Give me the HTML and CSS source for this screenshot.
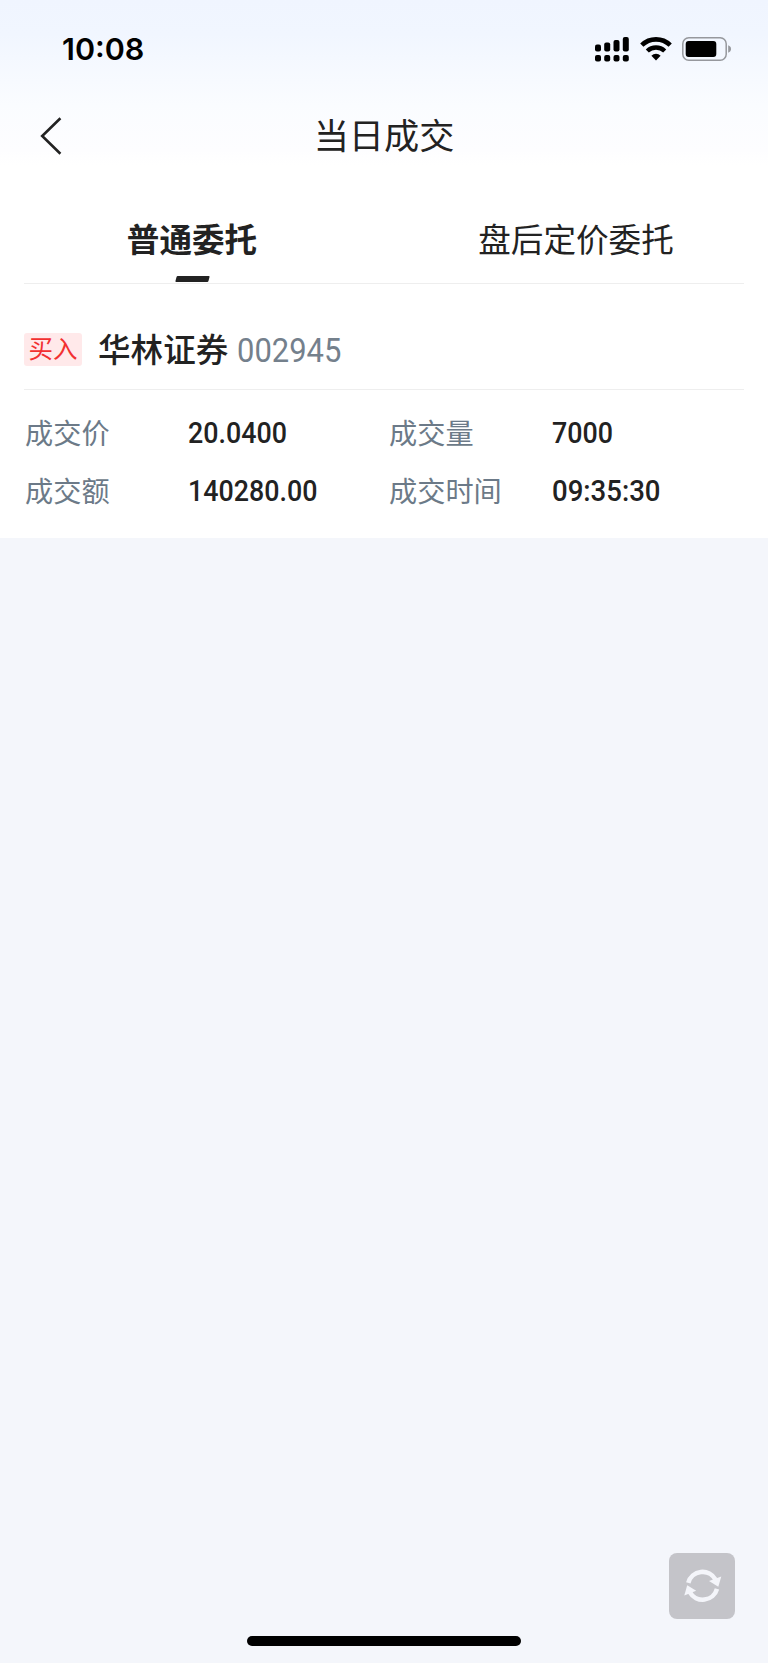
FILE: index.html
```
<!DOCTYPE html>
<html lang="zh-CN">
<head>
    <meta charset="UTF-8">
    <meta name="viewport" content="width=device-width, initial-scale=1.0">
    <title>当日成交</title>
    <link rel="stylesheet" href="styles.css">
</head>
<body>

<div class="top">
    <div class="status-bar">
        <span class="time">10:08</span>
        <div class="status-icons">
            <svg class="signal" width="34" height="25" viewBox="0 0 34 25">
                <rect x="0" y="7.5" width="6" height="7" rx="2"/>
                <rect x="9.2" y="5.5" width="6" height="9" rx="2"/>
                <rect x="18.5" y="3" width="6" height="11.5" rx="2"/>
                <rect x="27.8" y="0" width="6" height="14.5" rx="2"/>
                <rect x="0" y="18" width="6" height="6.4" rx="2"/>
                <rect x="9.2" y="18" width="6" height="6.4" rx="2"/>
                <rect x="18.5" y="18" width="6" height="6.4" rx="2"/>
                <rect x="27.8" y="18" width="6" height="6.4" rx="2"/>
            </svg>
            <svg class="wifi" width="32" height="24" viewBox="0 0 32 24">
                <path d="M1.8 8.2A20.3 20.3 0 0 1 30.2 8.2" fill="none" stroke="#000" stroke-width="4.6"/>
                <path d="M7.3 14A12.5 12.5 0 0 1 24.7 14" fill="none" stroke="#000" stroke-width="4.4"/>
                <path d="M11.4 18.7A6.6 6.6 0 0 1 20.6 18.7L16 23.4Z"/>
            </svg>
            <svg class="battery" width="50" height="24" viewBox="0 0 50 24">
                <rect x="0.8" y="0.8" width="43.4" height="22.4" rx="6" fill="none" stroke="#96989d" stroke-width="1.5"/>
                <rect x="3.7" y="4" width="30.6" height="16" rx="3"/>
                <path d="M46.2 8.3C50 9.6 50 14.4 46.2 15.7Z" fill="#96989d"/>
            </svg>
        </div>
    </div>
    <div class="nav">
        <svg class="back" width="24" height="40" viewBox="0 0 24 40">
            <path d="M22.4 2.3L4.2 20L22.4 37.7" fill="none" stroke="#222" stroke-width="2.6"/>
        </svg>
        <h1>当日成交</h1>
    </div>
</div>

<div class="tabs">
    <div class="tab active">普通委托</div>
    <div class="tab">盘后定价委托</div>
</div>

<div class="deal">
    <div class="deal-head">
        <span class="tag">买入</span>
        <span class="name">华林证券</span>
        <span class="code">002945</span>
    </div>
    <div class="deal-info">
        <span class="label">成交价</span><span class="value">20.0400</span>
        <span class="label">成交量</span><span class="value">7000</span>
        <span class="label">成交额</span><span class="value">140280.00</span>
        <span class="label">成交时间</span><span class="value clock">09:35:30</span>
    </div>
</div>

<div class="bottom">
    <button class="refresh">
        <svg width="38" height="36" viewBox="0 0 38 36">
            <path d="M4.3 14.8A14.8 14.8 0 0 1 31.5 11.5" fill="none" stroke="#f4f5fa" stroke-width="4.6"/>
            <path d="M25 13L37.3 8.6L34.3 18.8Z" fill="#f4f5fa"/>
            <path d="M33 20.8A14.8 14.8 0 0 1 5.8 24.1" fill="none" stroke="#f4f5fa" stroke-width="4.6"/>
            <path d="M12.2 22.8L0.3 27.4L3.2 17.2Z" fill="#f4f5fa"/>
        </svg>
    </button>
    <div class="home-bar"></div>
</div>

</body>
</html>
```
FILE: styles.css
```
* {
    box-sizing: border-box;
}
body {
    margin: 0;
    height: 1663px;
    display: flex;
    flex-direction: column;
    background: #f4f6fb;
    color: #222;
    font-family: "Noto Sans CJK SC", sans-serif;
}
.top {
    height: 174px;
    background: linear-gradient(#f0f5ff 0, #f1f6ff 34px, #fafcff 105px, #fdfdff 150px, #fff 165px);
}
.status-bar {
    height: 98px;
    padding: 0 36px 0 62px;
    display: flex;
    align-items: center;
    justify-content: space-between;
}
.time {
    padding-bottom: 1px;
    font-family: Inter, sans-serif;
    font-size: 30.5px;
    font-weight: 600;
    color: #000;
}
.status-icons {
    display: flex;
    align-items: center;
    gap: 10.5px;
}
.nav {
    height: 76px;
    padding: 0 38px;
    display: grid;
    grid-template-columns: 24px 1fr 24px;
    align-items: center;
}
h1 {
    margin: 0;
    padding-bottom: 4px;
    font-size: 35.2px;
    font-weight: 400;
    line-height: 72px;
    text-align: center;
}
.tabs {
    height: 110px;
    padding-top: 22px;
    display: flex;
    background: linear-gradient(#eee, #eee) 24px 109px / 720px 1px no-repeat #fff;
}
.tab {
    flex: 1;
    display: flex;
    flex-direction: column;
    align-items: center;
    font-size: 32.6px;
    line-height: 84px;
}
.active {
    font-weight: 700;
}
.active::after {
    content: "";
    width: 33px;
    height: 6px;
    margin-top: -4px;
    border-radius: 1px;
    background: #222;
    transform: skewX(-15deg);
}
.deal {
    height: 254px;
    padding: 0 24px;
    background: #fff;
}
.deal-head {
    height: 106px;
    padding-top: 26px;
    border-bottom: 1px solid #eee;
    display: flex;
    align-items: center;
}
.tag {
    width: 58px;
    height: 33px;
    border-radius: 3px;
    background: #ffe9ea;
    color: #f23030;
    font-size: 24.5px;
    line-height: 30px;
    text-align: center;
}
.name {
    margin-left: 16px;
    padding-bottom: 4px;
    font-size: 32.6px;
    font-weight: 500;
}
.code {
    margin-left: 9px;
    color: #74808c;
    font-family: Roboto, sans-serif;
    font-size: 34px;
    font-weight: 400;
    transform: scaleX(0.91);
    transform-origin: left;
}
.deal-info {
    padding-top: 15px;
    display: grid;
    grid-template-columns: 164px 200px 164px 1fr;
    grid-auto-rows: 58px;
    align-items: center;
}
.label {
    padding: 0 0 5px 1px;
    color: #6c7a88;
    font-size: 28.2px;
    white-space: nowrap;
}
.value {
    padding-bottom: 2px;
    font-family: Roboto, sans-serif;
    font-size: 29px;
    font-weight: 500;
    transform: scaleX(0.925);
    transform-origin: left;
}
.clock {
    transform: scaleX(0.95);
}
.bottom {
    margin-top: auto;
    height: 110px;
    display: flex;
    flex-direction: column;
    align-items: center;
}
.refresh {
    align-self: flex-end;
    width: 66px;
    height: 66px;
    margin-right: 33px;
    padding: 0 0 0 2px;
    border: none;
    border-radius: 8px;
    background: #c4c4c9;
    display: flex;
    align-items: center;
    justify-content: center;
}
.home-bar {
    width: 274px;
    height: 10px;
    margin-top: 17px;
    border-radius: 5px;
    background: #000;
}
```
